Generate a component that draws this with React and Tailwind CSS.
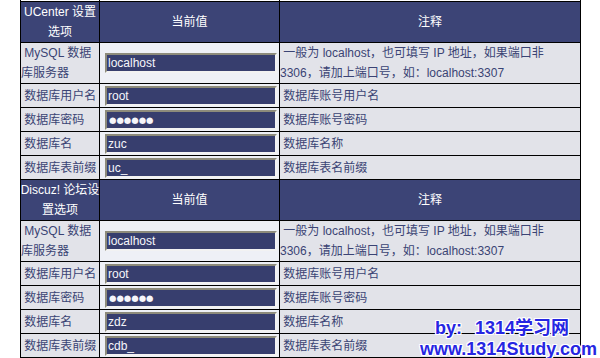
import React from "react";

const FONT = "[font-family:'Liberation_Sans','Noto_Sans_CJK_SC',sans-serif]";

function Field({ value, password }) {
  return (
    <input
      readOnly
      type="text"
      value={password ? "●●●●●●" : value}
      className={
        "ml-[5px] h-[20px] w-[172px] border-2 border-t-[#8d8b7b] border-l-[#8d8b7b] border-b-[#f2f2f2] border-r-[#f2f2f2] bg-[#373e6e] px-[1px] text-[#f6f6fa] outline-none " +
        (password
          ? "pl-[2px] text-[8.5px] [font-family:'DejaVu_Sans',sans-serif]"
          : "text-[12px] leading-[16px] [font-family:'Liberation_Sans',sans-serif]")
      }
    />
  );
}

function Header({ title }) {
  return (
    <div className="grid h-[41px] grid-cols-[79px_180px_300px] border-t border-black bg-[#3c4476] text-white">
      <div className="flex items-center justify-center whitespace-nowrap border-r border-black text-center leading-[20px]">
        {title}
      </div>
      <div className="flex items-center justify-center border-r border-black">当前值</div>
      <div className="flex items-center justify-center">注释</div>
    </div>
  );
}

function Row({ label, value, comment, password, tall }) {
  return (
    <div
      className={
        "grid grid-cols-[79px_180px_300px] border-t border-black " +
        (tall ? "h-[41px]" : "h-[24px]")
      }
    >
      <div className="flex items-center whitespace-nowrap border-r border-black bg-[#e2e3e9] leading-[20px] text-[#3a4374]">
        {label}
      </div>
      <div className="flex items-center border-r border-black bg-[#eef0f6]">
        <Field value={value} password={password} />
      </div>
      <div className="flex items-center whitespace-nowrap bg-[#e2e3e9] leading-[20px] text-[#3a4374]">
        {comment}
      </div>
    </div>
  );
}

function Section({ title, db, prefix }) {
  return (
    <>
      <Header title={title} />
      <Row
        tall
        label={
          <span>
            {"\u00a0"}MySQL 数据
            <br />
            库服务器
          </span>
        }
        value="localhost"
        comment={
          <span>
            {"\u00a0"}一般为 localhost，也可填写 IP 地址，如果端口非
            <br />
            3306，请加上端口号，如：localhost:3307
          </span>
        }
      />
      <Row label={"\u00a0数据库用户名"} value="root" comment={"\u00a0数据库账号用户名"} />
      <Row label={"\u00a0数据库密码"} value="" password comment={"\u00a0数据库账号密码"} />
      <Row label={"\u00a0数据库名"} value={db} comment={"\u00a0数据库名称"} />
      <Row label={"\u00a0数据库表前缀"} value={prefix} comment={"\u00a0数据库表名前缀"} />
    </>
  );
}

export default function App() {
  return (
    <div className={"relative h-[358px] w-[600px] overflow-hidden bg-white text-[12px] " + FONT}>
      <div className="pl-[20px]">
        <div className="w-[561px] border-x border-b border-black">
          <div className="grid h-[1px] grid-cols-[79px_180px_300px] bg-white">
            <div className="border-r border-black" />
            <div className="border-r border-black" />
            <div />
          </div>
          <Section
            title={
              <span>
                UCenter 设置
                <br />
                选项
              </span>
            }
            db="zuc"
            prefix="uc_"
          />
          <Section
            title={
              <span>
                Discuz! 论坛设
                <br />
                置选项
              </span>
            }
            db="zdz"
            prefix="cdb_"
          />
        </div>
      </div>
      <div className="absolute left-[420px] top-[318px] whitespace-nowrap text-[18px] font-bold leading-[21px] text-[#2626e2] [text-shadow:1px_0_#fff,-1px_0_#fff,0_1px_#fff,0_-1px_#fff,1px_1px_#fff,-1px_-1px_#fff,1px_-1px_#fff,-1px_1px_#fff]">
        <div className="pl-[15px]">
          by:<span className="ml-[13px]">1314学习网</span>
        </div>
        <div>www.1314Study.com</div>
      </div>
    </div>
  );
}
